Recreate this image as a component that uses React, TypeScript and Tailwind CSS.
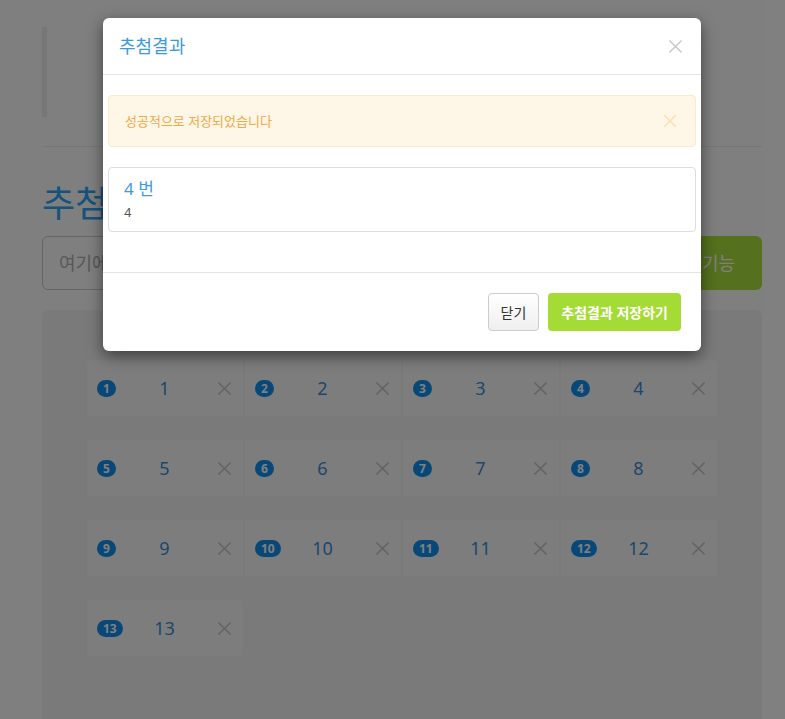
import { useState } from "react";

const numbers = Array.from({ length: 13 }, (_, i) => i + 1);

const CloseIcon = ({ className }: { className?: string }) => (
  <svg viewBox="0 0 16 16" className={className} fill="none" stroke="currentColor" strokeWidth="1.6">
    <path d="M1.5 1.5 L14.5 14.5 M14.5 1.5 L1.5 14.5" />
  </svg>
);

const NumberItem = ({ n }: { n: number }) => (
  <div className="grid h-[56px] grid-cols-[1fr_auto_1fr] items-center rounded-[3px] bg-[#fbfbfb] pl-[10px] pr-[11px]">
    <span className="justify-self-start rounded-[10px] bg-[#1190f0] px-[6px] py-[1px] text-[12px] leading-[15px] font-bold text-white">
      {n}
    </span>
    <span className="text-[18px] leading-none text-[#3a8fd6]">{n}</span>
    <CloseIcon className="h-[15px] w-[15px] justify-self-end text-[#c4c4c4]" />
  </div>
);

export default function App() {
  const [saved] = useState(true);

  return (
    <div className="relative h-[719px] overflow-hidden bg-white font-['Noto_Sans','Noto_Sans_CJK_KR',sans-serif]">
      {/* page behind the modal */}
      <div className="ml-[42px] w-[720px] pt-[27px]">
        <div className="h-[90px] border-l-[5px] border-[#eeeeee]" />
        <hr className="mt-[29px] border-t border-[#eeeeee]" />
        <h1 className="mt-[33px] text-[36px] leading-[48px] text-[#2aa6fa]">
          추첨 번호를 입력하고 목록에 추가하는 기능
        </h1>
        <div className="mt-[8px] flex h-[54px]">
          <input
            className="flex-1 rounded-l-[6px] border border-[#cccccc] px-4 text-[18px] outline-none placeholder:text-[#b0b0b0]"
            placeholder="여기에 추첨 번호를 입력하세요"
          />
          <button className="rounded-r-[6px] bg-[#abe03c] px-[27px] text-[18px] text-white">
            번호추가기능
          </button>
        </div>
        <div className="mt-[20px] h-[460px] rounded-[6px] bg-[#f5f5f5] px-[45px] pt-[50px]">
          <div className="grid grid-cols-4 gap-x-[2px] gap-y-6">
            {numbers.map((n) => (
              <NumberItem key={n} n={n} />
            ))}
          </div>
        </div>
      </div>

      {/* backdrop */}
      <div className="absolute inset-0 bg-black/50" />

      {/* result modal */}
      <div className="absolute top-[18px] left-[103px] w-[598px] rounded-[6px] bg-white shadow-[0_5px_15px_rgba(0,0,0,0.5)]">
        <div className="flex items-center justify-between border-b border-[#e5e5e5] px-[16px] py-[15px]">
          <h4 className="text-[18px] leading-[26px] text-[#3d9bdc]">추첨결과</h4>
          <CloseIcon className="mr-[2px] h-[15px] w-[15px] text-[#c8c8c8]" />
        </div>

        <div className="px-[5px] py-[20px]">
          {saved && (
            <div className="flex items-center justify-between rounded-[4px] border border-[#fbeacb] bg-[#fef6e7] px-[16px] py-[15px]">
              <span className="text-[13px] leading-[20px] text-[#eeaa48]">성공적으로 저장되었습니다</span>
              <CloseIcon className="mr-[2px] h-[14px] w-[14px] text-[#fbe0ab]" />
            </div>
          )}

          <div className="mt-[20px] mb-[20px] rounded-[4px] border border-[#dddddd] px-[15px] py-[10px]">
            <h4 className="mb-[3px] text-[17px] leading-[22px] text-[#3d9bdc]">4 번</h4>
            <p className="text-[13px] leading-[18px] text-[#555555]">4</p>
          </div>
        </div>

        <div className="flex justify-end gap-[9px] border-t border-[#e5e5e5] p-[20px]">
          <button className="h-[38px] rounded-[4px] border border-[#cccccc] bg-linear-to-b from-white to-[#efefef] px-[12px] text-[14px] text-[#333333]">
            닫기
          </button>
          <button className="h-[38px] rounded-[4px] bg-[#a4db34] px-[13px] text-[14px] font-bold text-white">
            추첨결과 저장하기
          </button>
        </div>
      </div>
    </div>
  );
}
